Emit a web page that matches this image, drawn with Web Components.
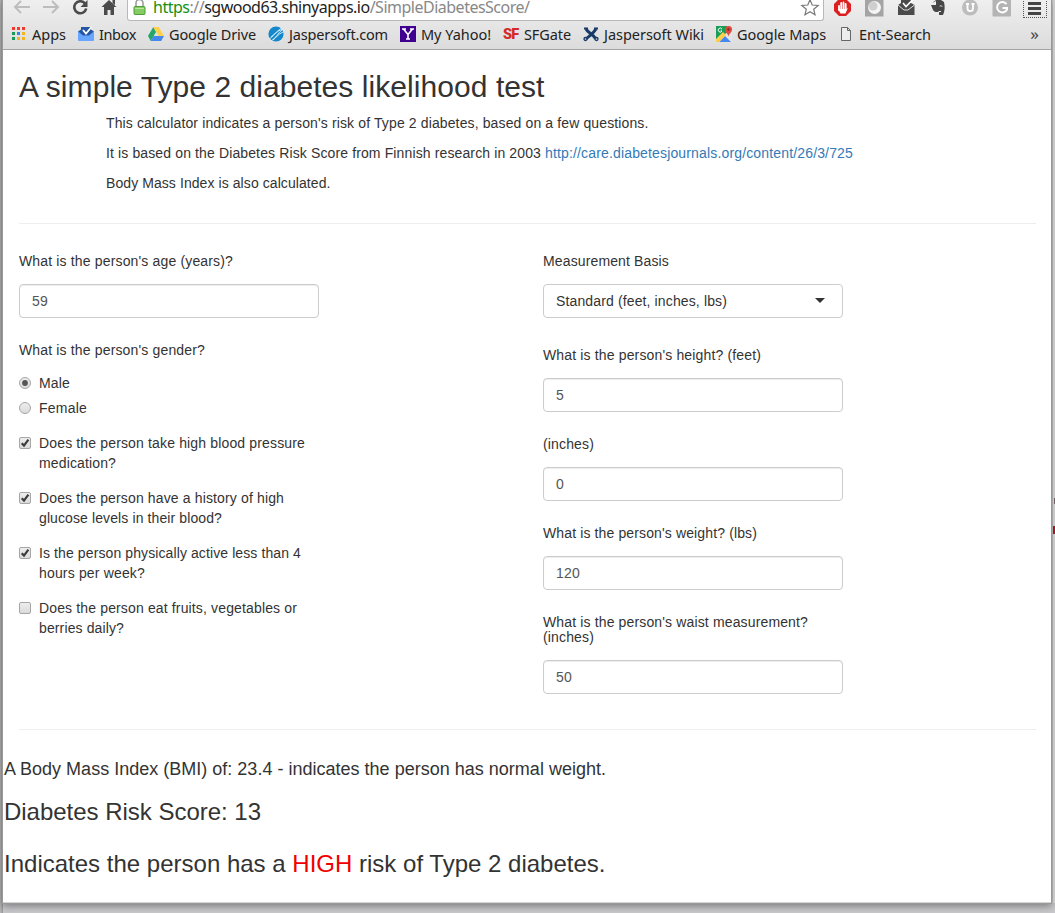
<!DOCTYPE html>
<html lang="en"><head><meta charset="utf-8"><title>A simple Type 2 diabetes likelihood test</title>
<style>
html,body{margin:0;height:913px;overflow:hidden;background:#c9c9cd}
body{font:14px/20px "Liberation Sans",Arial,sans-serif;color:#333}
</style></head><body>
<app-window></app-window>
<script>
function define(name, html, ready){
  customElements.define(name, class extends HTMLElement{
    connectedCallback(){
      if(this.shadowRoot) return;
      this.attachShadow({mode:'open'}).innerHTML = html;
      if(ready) ready.call(this, this.shadowRoot);
    }
  });
}

/* One line of text, tracked to a given width. */
define('fit-text','<style>:host{display:block;white-space:nowrap}span{display:inline-block;white-space:pre}</style><span><slot></slot></span>',function(root){
  const w=+this.getAttribute('w'), s=root.querySelector('span');
  const n=s.getBoundingClientRect().width;
  if(w&&n) s.style.letterSpacing=((w-n)/this.textContent.length)+'px';
  this.style.width=w+'px';
});

const icons={
 apps:'<g><path fill="#f03b2d" d="M1 1h3v3H1zM6 1h3v3H6zM11 1h3v3h-3z"/><path fill="#159b55" d="M1 6h3v3H1z"/><path fill="#3584e8" d="M6 6h3v3H6z"/><path fill="#f5b520" d="M11 6h3v3h-3zM6 11h3v3H6zM11 11h3v3h-3z"/><path fill="#159b55" d="M1 11h3v3H1z"/></g>',
 inbox:'<path fill="#2456a5" d="M0 5.500l3-2V1h10v2.500l3 2-5 5H5z"/><path d="M5 4l3 3.500L13.500 1" fill="none" stroke="#fff" stroke-width="1.800"/><path fill="#67a5ff" d="M0 5.500l5 4h6l5-4V14a1 1 0 0 1-1 1H1a1 1 0 0 1-1-1z"/>',
 drive:'<path fill="#25a66a" d="M5.3 1L0 10l2.700 5L8 6z"/><path fill="#ffd04a" d="M5.300 1h5.400L16 10h-5.300z"/><path fill="#4688ee" d="M5.500 10H16l-2.800 5H2.700z"/>',
 jasper:'<circle cx="8" cy="8" r="7.600" fill="#1687c9"/><path d="M1 13C5 11 8 5 15 3C10 7 8 12 3 15M3 11C7 8 10 4 14 2M5 14c3-2 5-6 10-8" stroke="#d8f0ff" stroke-width=".9" fill="none"/>',
 yahoo:'<path fill="#400090" d="M0 0h16v16H0z"/><path d="M3.500 3L8 8.500 12.500 3M8 8v5M2 3h4M10 3h4M6 13h4" stroke="#fff" stroke-width="1.600" fill="none"/>',
 wiki:'<path d="M3 3c2 4 7 5 10 10M13 3c-3 5-6 6-10 10" stroke="#173a68" stroke-width="3" fill="none"/><path d="M1 2.500h4M11 2.500h4" stroke="#173a68" stroke-width="2"/><circle cx="2.500" cy="13" r="1.500" fill="#c9d2de" stroke="#173a68" stroke-width="1.300"/><circle cx="13.500" cy="13" r="1.500" fill="#c9d2de" stroke="#173a68" stroke-width="1.300"/>',
 maps:'<path fill="#e4e4e4" d="M0 0h16v16H0z"/><path fill="#199d57" d="M0 0h11v6L2 16H0z"/><path fill="#4688f1" d="M3 16l6-6 6 6z"/><path fill="#ffcf4b" d="M0 13l7-7 3 3-7 7H0z"/><path d="M6 3.200A2 2 0 1 0 6 5H4.500" fill="none" stroke="#fff" stroke-width="1"/><path fill="#dd4b3e" d="M12.500 0A3.400 3.400 0 0 1 16 3.500c0 3-3 4-3.500 7C12 7.500 9 6.500 9 3.500A3.400 3.400 0 0 1 12.500 0z"/><circle cx="12.500" cy="3.500" r="1.200" fill="#812b25"/>',
 file:'<path d="M3.500 1.500h6l3 3v10h-9zM9.500 1.500v3h3" fill="#ededed" stroke="#666"/>',
 back:'<path d="M1 8h15M7 2L1 8l6 6" fill="none" stroke="#bdbdbd" stroke-width="2"/>',
 fwd:'<path d="M0 8h15M9 2l6 6-6 6" fill="none" stroke="#bdbdbd" stroke-width="2"/>',
 reload:'<path d="M13 4.500a6 6 0 1 0 1.200 5" fill="none" stroke="#4b4b4b" stroke-width="2.600"/><path fill="#4b4b4b" d="M15.500 1v7h-7z"/>',
 home:'<path fill="#4b4b4b" d="M8 1l7.500 7H13v8H9.500v-5h-3v5H3V8H.5zM11.500 1H14v5l-2.500-2z"/>',
 lock:'<path d="M4 8V4a3.500 3.500 0 0 1 7 0v4" fill="none" stroke="#999" stroke-width="1.500"/><rect x="2" y="7.500" width="11" height="8" rx="1" fill="#85cc62" stroke="#4f9a39"/><path d="M3 9.500h9" stroke="#b9e69f"/>',
 star:'<path d="M8 .8l2.200 5.200 6 .4-4.500 3.800 1.300 5.500L8 12.700l-5 3 1.300-5.500L-.2 6.400 5.800 6z" fill="#fff" stroke="#777" stroke-width="1.200"/>',
 hand:'<path d="M5 -1h7l5 5v7l-5 5H5l-5-5V4z" fill="#dc1f1f"/><path d="M5 6v4M7.200 3v7M9.500 2.500v7M11.700 4v6" stroke="#fff" stroke-width="1.800" stroke-linecap="round"/><path d="M4 9h8.500l1.500-1.500L11.500 13.500h-5z" fill="#fff"/>',
 moon:'<rect x="-1" y="-2" width="18.500" height="18.500" fill="#a4a4a4"/><circle cx="8.500" cy="7.500" r="6.500" fill="#f4f4f4"/><circle cx="7" cy="6" r="4.500" fill="#cfcfcf"/>',
 mail:'<path fill="#4b4b4b" d="M0 5l3-2V-1h10v4l3.500 2v10H0z"/><path d="M0 5l6 5h4l6.500-5" fill="none" stroke="#ddd"/><path d="M5 3l3 3.500L14.500 0" fill="none" stroke="#fff" stroke-width="1.600"/>',
 ever:'<path fill="#474747" d="M2 3l4-3h5l3 2c1 4 1 9-1 13H9v-3h2v-1H9c-1 2-5 1-6-1L1 5h5V1z"/><path d="M10 6.500c0-1.300 2-1.300 2 .4" stroke="#ddd" fill="none"/>',
 u:'<circle cx="8" cy="7.500" r="8" fill="#bdbdbd"/><path d="M5.500 4V8.500c0 3.500 5.500 3.500 5.500 0V4M4 4h3M9.500 4h3" fill="none" stroke="#fff" stroke-width="1.800"/>',
 g:'<rect x="-1.500" y="-2" width="18.500" height="18.500" rx="1" fill="#b4b4b4"/><path d="M12.500 4.200A5.200 5.200 0 1 0 13 9.500V8H8.500" fill="none" stroke="#fff" stroke-width="2"/>',
 menu:'<path d="M2 1.500h13M2 6.500h13M2 11.500h13" stroke="#444" stroke-width="3"/>'
};
define('svg-icon','<style>:host{display:block;width:16px;height:16px;flex:none}svg{display:block;overflow:visible}b{display:block;font:900 14.500px/18px Roboto,sans-serif;letter-spacing:-.8px;color:#d22b2b}</style>',function(root){
  const n=this.getAttribute('name');
  root.innerHTML+= n==='sf' ? '<b>SF</b>' : '<svg width="16" height="16" viewBox="0 0 16 16">'+icons[n]+'</svg>';
});

define('bookmark-item','<style>:host{display:flex;align-items:center;gap:5px;height:20px}fit-text{font:14.500px/20px "Noto Sans",sans-serif;color:#222}</style>',function(root){
  root.innerHTML+=`<svg-icon name="${this.getAttribute('icon')}"></svg-icon><fit-text w="${this.getAttribute('w')}">${this.getAttribute('label')}</fit-text>`;
});

define('browser-bar',`<style>
:host{display:block;height:49px;border-bottom:1px solid #a3a3a3;background:linear-gradient(#efefef,#dcdcdc);box-sizing:content-box}
.nav{display:flex;height:21px}
.left{display:flex;gap:13px;padding-left:11px;width:113px;align-items:flex-start}
.left svg-icon{margin-top:-1px}
.url{display:flex;box-sizing:border-box;width:697px;height:21px;border:1px solid #b9b9b9;border-top:0;border-radius:0 0 3px 3px;background:#fff;padding-left:4px}
.url fit-text{font:16px/16px "Noto Sans",sans-serif;color:#888;margin:-1px 0 0 5px}
.url svg-icon{margin-top:-1px}.url svg-icon:last-child{margin-left:auto;margin-right:5px}
i{font-style:normal;color:#169016}u{text-decoration:none;color:#222}
.ext{display:flex;gap:16px;padding-left:10px}
.menu{margin:-3px 0 0 -3px;width:20px;height:15px;border:1px dotted #555;padding:4px 0 0 2px;flex:none}
.marks{display:flex;gap:12px;padding:3px 0 0 8px}
.more{margin-left:auto;margin-right:12px;font:17px/20px "Noto Sans",sans-serif;color:#444}
</style>
<div class="nav"><div class="left"><svg-icon name="back"></svg-icon><svg-icon name="fwd"></svg-icon><svg-icon name="reload"></svg-icon><svg-icon name="home"></svg-icon></div>
<div class="url"><svg-icon name="lock"></svg-icon><fit-text w="376.500"><i>https</i>://<u>sgwood63.shinyapps.io</u>/SimpleDiabetesScore/</fit-text><svg-icon name="star"></svg-icon></div>
<div class="ext"><svg-icon name="hand"></svg-icon><svg-icon name="moon"></svg-icon><svg-icon name="mail"></svg-icon><svg-icon name="ever"></svg-icon><svg-icon name="u"></svg-icon><svg-icon name="g"></svg-icon><div class="menu"><svg-icon name="menu"></svg-icon></div></div></div>
<div class="marks"><bookmark-item icon="apps" label="Apps" w="34"></bookmark-item><bookmark-item icon="inbox" label="Inbox" w="37"></bookmark-item><bookmark-item icon="drive" label="Google Drive" w="87"></bookmark-item><bookmark-item icon="jasper" label="Jaspersoft.com" w="99"></bookmark-item><bookmark-item icon="yahoo" label="My Yahoo!" w="70"></bookmark-item><bookmark-item icon="sf" label="SFGate" w="47"></bookmark-item><bookmark-item icon="wiki" label="Jaspersoft Wiki" w="100"></bookmark-item><bookmark-item icon="maps" label="Google Maps" w="89"></bookmark-item><bookmark-item icon="file" label="Ent-Search" w="72"></bookmark-item><span class="more">»</span></div>`);

/* Label over a text box or a drop-down. */
define('form-field',`<style>
:host{display:block;width:300px}
.label{font-size:14px;line-height:15.400px;margin-bottom:var(--label-gap,15px)}
.box{box-sizing:border-box;height:34px;border:1px solid #ccc;border-radius:4px;padding:6px 12px;line-height:20px;color:#555;display:flex;align-items:center;box-shadow:inset 0 1px 1px rgba(0,0,0,.075)}
:host([select]) .box{color:#333;box-shadow:none}
.arrow{display:none;margin-left:auto;margin-right:5px;margin-top:-2px;border:5px solid transparent;border-top-color:#333;border-bottom:0}
:host([select]) .arrow{display:block}
</style><div class="label"><slot></slot></div><div class="box"><span class="value"></span><span class="arrow"></span></div>`,function(root){
  root.querySelector('.value').innerHTML=this.getAttribute('value');
});

define('choice-item',`<style>
:host{display:flex;gap:8px;line-height:20px}
svg{display:block;flex:none;margin-top:4px}
</style><svg width="12" height="12" viewBox="0 0 12 12"><defs><linearGradient id="g" x2="0" y2="1"><stop stop-color="#eee"/><stop offset="1" stop-color="#dadada"/></linearGradient></defs></svg><div><slot></slot></div>`,function(root){
  const radio=this.hasAttribute('radio'), on=this.hasAttribute('checked');
  root.querySelector('svg').innerHTML+= radio
    ? '<circle cx="6" cy="6" r="5.500" fill="url(#g)" stroke="#a6a6a6"/>'+(on?'<circle cx="6" cy="6" r="2.900" fill="#555"/>':'')
    : '<rect x=".5" y=".5" width="11" height="11" rx="1.500" fill="url(#g)" stroke="#a6a6a6"/>'+(on?'<path d="M2.700 6.200l2.300 2.400 4.400-6" fill="none" stroke="#3c3c3c" stroke-width="2.200"/>':'');
});

define('diabetes-form',`<style>
:host{display:block;padding:20px 15px 0}
h2{margin:0;font-weight:400;font-size:30px;line-height:33px}
.intro{padding:10px 0 0 87px;display:grid;gap:10px}
.link{display:flex;gap:4px}a{color:#337ab7;text-decoration:none}
hr{margin:30px 0;border:0;border-top:1px solid #eee}
.cols{display:grid;grid-template-columns:524px 1fr}
.gender{margin:24px 0 15px;line-height:16px}
.radios{display:grid;gap:5px;margin-bottom:15px}
.checks{display:grid;gap:15px}
.right{display:flex;flex-direction:column;gap:24.600px}
.right form-field:first-child{margin-bottom:5px}
.right form-field:last-child{--label-gap:14.200px}
</style>
<h2><fit-text w="525.500">A simple Type 2 diabetes likelihood test</fit-text></h2>
<div class="intro"><fit-text w="542.500">This calculator indicates a person's risk of Type 2 diabetes, based on a few questions.</fit-text>
<div class="link"><fit-text w="435">It is based on the Diabetes Risk Score from Finnish research in 2003</fit-text><a><fit-text w="308">http://care.diabetesjournals.org/content/26/3/725</fit-text></a></div>
<fit-text w="224.500">Body Mass Index is also calculated.</fit-text></div>
<hr>
<div class="cols"><div>
<form-field value='<fit-text w="16">59</fit-text>'><fit-text w="214">What is the person's age (years)?</fit-text></form-field>
<div class="gender"><fit-text w="186">What is the person's gender?</fit-text></div>
<div class="radios"><choice-item radio checked><fit-text w="31">Male</fit-text></choice-item><choice-item radio><fit-text w="48">Female</fit-text></choice-item></div>
<div class="checks">
<choice-item checked><fit-text w="266">Does the person take high blood pressure</fit-text><fit-text w="77">medication?</fit-text></choice-item>
<choice-item checked><fit-text w="245">Does the person have a history of high</fit-text><fit-text w="183">glucose levels in their blood?</fit-text></choice-item>
<choice-item checked><fit-text w="262">Is the person physically active less than 4</fit-text><fit-text w="106">hours per week?</fit-text></choice-item>
<choice-item><fit-text w="258">Does the person eat fruits, vegetables or</fit-text><fit-text w="85">berries daily?</fit-text></choice-item>
</div></div>
<div class="right">
<form-field select value='<fit-text w="171">Standard (feet, inches, lbs)</fit-text>'><fit-text w="126">Measurement Basis</fit-text></form-field>
<form-field value="5"><fit-text w="218">What is the person's height? (feet)</fit-text></form-field>
<form-field value="0"><fit-text w="51">(inches)</fit-text></form-field>
<form-field value='<fit-text w="24">120</fit-text>'><fit-text w="214">What is the person's weight? (lbs)</fit-text></form-field>
<form-field value='<fit-text w="16">50</fit-text>'><fit-text w="265">What is the person's waist measurement?</fit-text><fit-text w="51">(inches)</fit-text></form-field>
</div></div>
<hr style="margin:35px 0 0">`);

define('risk-result',`<style>
:host{display:block;padding-top:29px}
.bmi{font-size:18px;line-height:20px;margin-bottom:20px}
.score{font-size:24px;line-height:26px;margin-bottom:26px}
b{font-weight:400;color:#f00000}
</style><div class="bmi"><fit-text w="602">A Body Mass Index (BMI) of: 23.4 - indicates the person has normal weight.</fit-text></div>
<div class="score"><fit-text w="257">Diabetes Risk Score: 13</fit-text></div>
<div class="score"><fit-text w="601.500">Indicates the person has a <b>HIGH</b> risk of Type 2 diabetes.</fit-text></div>`);

define('app-window',`<style>
:host{display:grid;grid-template-columns:1047px 1fr;box-sizing:border-box;height:913px;padding-left:3px;background:linear-gradient(90deg,#bbb,#999 3px,#c9c9cd 3px)}
.win{box-sizing:border-box;height:903px;background:#fff;border-bottom:1px solid #d5d5d5;box-shadow:0 0 0 1px #999,0 2px 8px 1px rgba(0,0,0,.4);width:1048px}
.page{padding:0 0 0 1px}
.edge{margin-left:3px;padding-top:498px;background:#c9c9c9;z-index:1;height:405px}
.edge i{display:block;width:1px;margin-left:auto;height:6px;background:#706060}
.edge i+i{height:8px;margin-top:22px;background:#a01824;width:2px}
</style><div class="win"><browser-bar></browser-bar><div class="page"><diabetes-form></diabetes-form><risk-result></risk-result></div></div><div class="edge"><i></i><i></i></div>`);
</script></body></html>
